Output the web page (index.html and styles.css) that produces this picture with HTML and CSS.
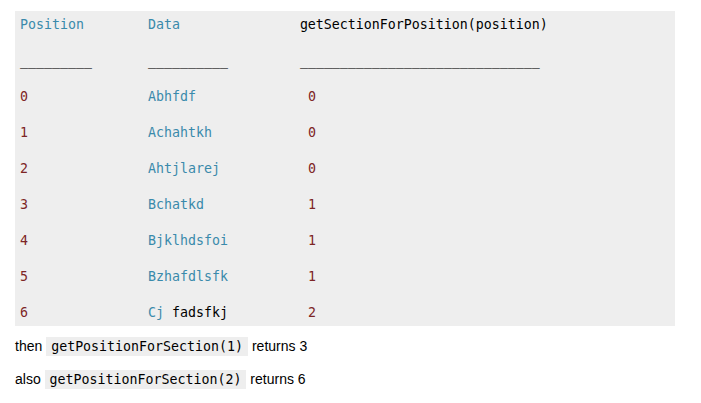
FILE: index.html
```html
<!DOCTYPE html>
<html>
<head>
<meta charset="utf-8">
<link rel="stylesheet" href="styles.css">
</head>
<body>
<div class="post">
<pre class="code"><code><span class="typ">Position</span>        <span class="typ">Data</span>               <span class="pln">getSectionForPosition(position)</span>

<span class="pln">_________</span>       <span class="pln">__________</span>         <span class="pln">______________________________</span>

<span class="lit">0</span>               <span class="typ">Abhfdf</span>              <span class="lit">0</span>

<span class="lit">1</span>               <span class="typ">Achahtkh</span>            <span class="lit">0</span>

<span class="lit">2</span>               <span class="typ">Ahtjlarej</span>           <span class="lit">0</span>

<span class="lit">3</span>               <span class="typ">Bchatkd</span>             <span class="lit">1</span>

<span class="lit">4</span>               <span class="typ">Bjklhdsfoi</span>          <span class="lit">1</span>

<span class="lit">5</span>               <span class="typ">Bzhafdlsfk</span>          <span class="lit">1</span>

<span class="lit">6</span>               <span class="typ">Cj</span> <span class="pln">fadsfkj</span>          <span class="lit">2</span></code></pre>
<p class="line">then <code class="inline">getPositionForSection(1)</code> returns 3</p>
<p class="line">also <code class="inline">getPositionForSection(2)</code> returns 6</p>
</div>
</body>
</html>
```
FILE: styles.css
```css
html, body {
  margin: 0;
  padding: 0;
  background: #ffffff;
}

.post {
  padding: 11px 26px 0 15px;
  font-family: "Liberation Sans", Arial, sans-serif;
  font-size: 14px;
  color: #000;
}

.code {
  margin: 0 0 11px 0;
  padding: 5px 5px 4px 5px;
  background: #eeeeee;
  font-family: "DejaVu Sans Mono", "Liberation Mono", monospace;
  font-size: 13.29px;
  line-height: 18px;
  color: #000;
  white-space: pre;
  overflow: hidden;
}

.code code {
  font-family: inherit;
  font-size: inherit;
}

.typ { color: #3a8aab; }
.lit { color: #7d2525; }
.pln { color: #000000; }

.line {
  margin: 0 0 15px 0;
  line-height: 18px;
}

.line + .line {
  margin-top: -1px;
}

.inline {
  font-family: "DejaVu Sans Mono", "Liberation Mono", monospace;
  font-size: 13.29px;
  background: #eeeeee;
  padding: 2px 5px;
}
```
